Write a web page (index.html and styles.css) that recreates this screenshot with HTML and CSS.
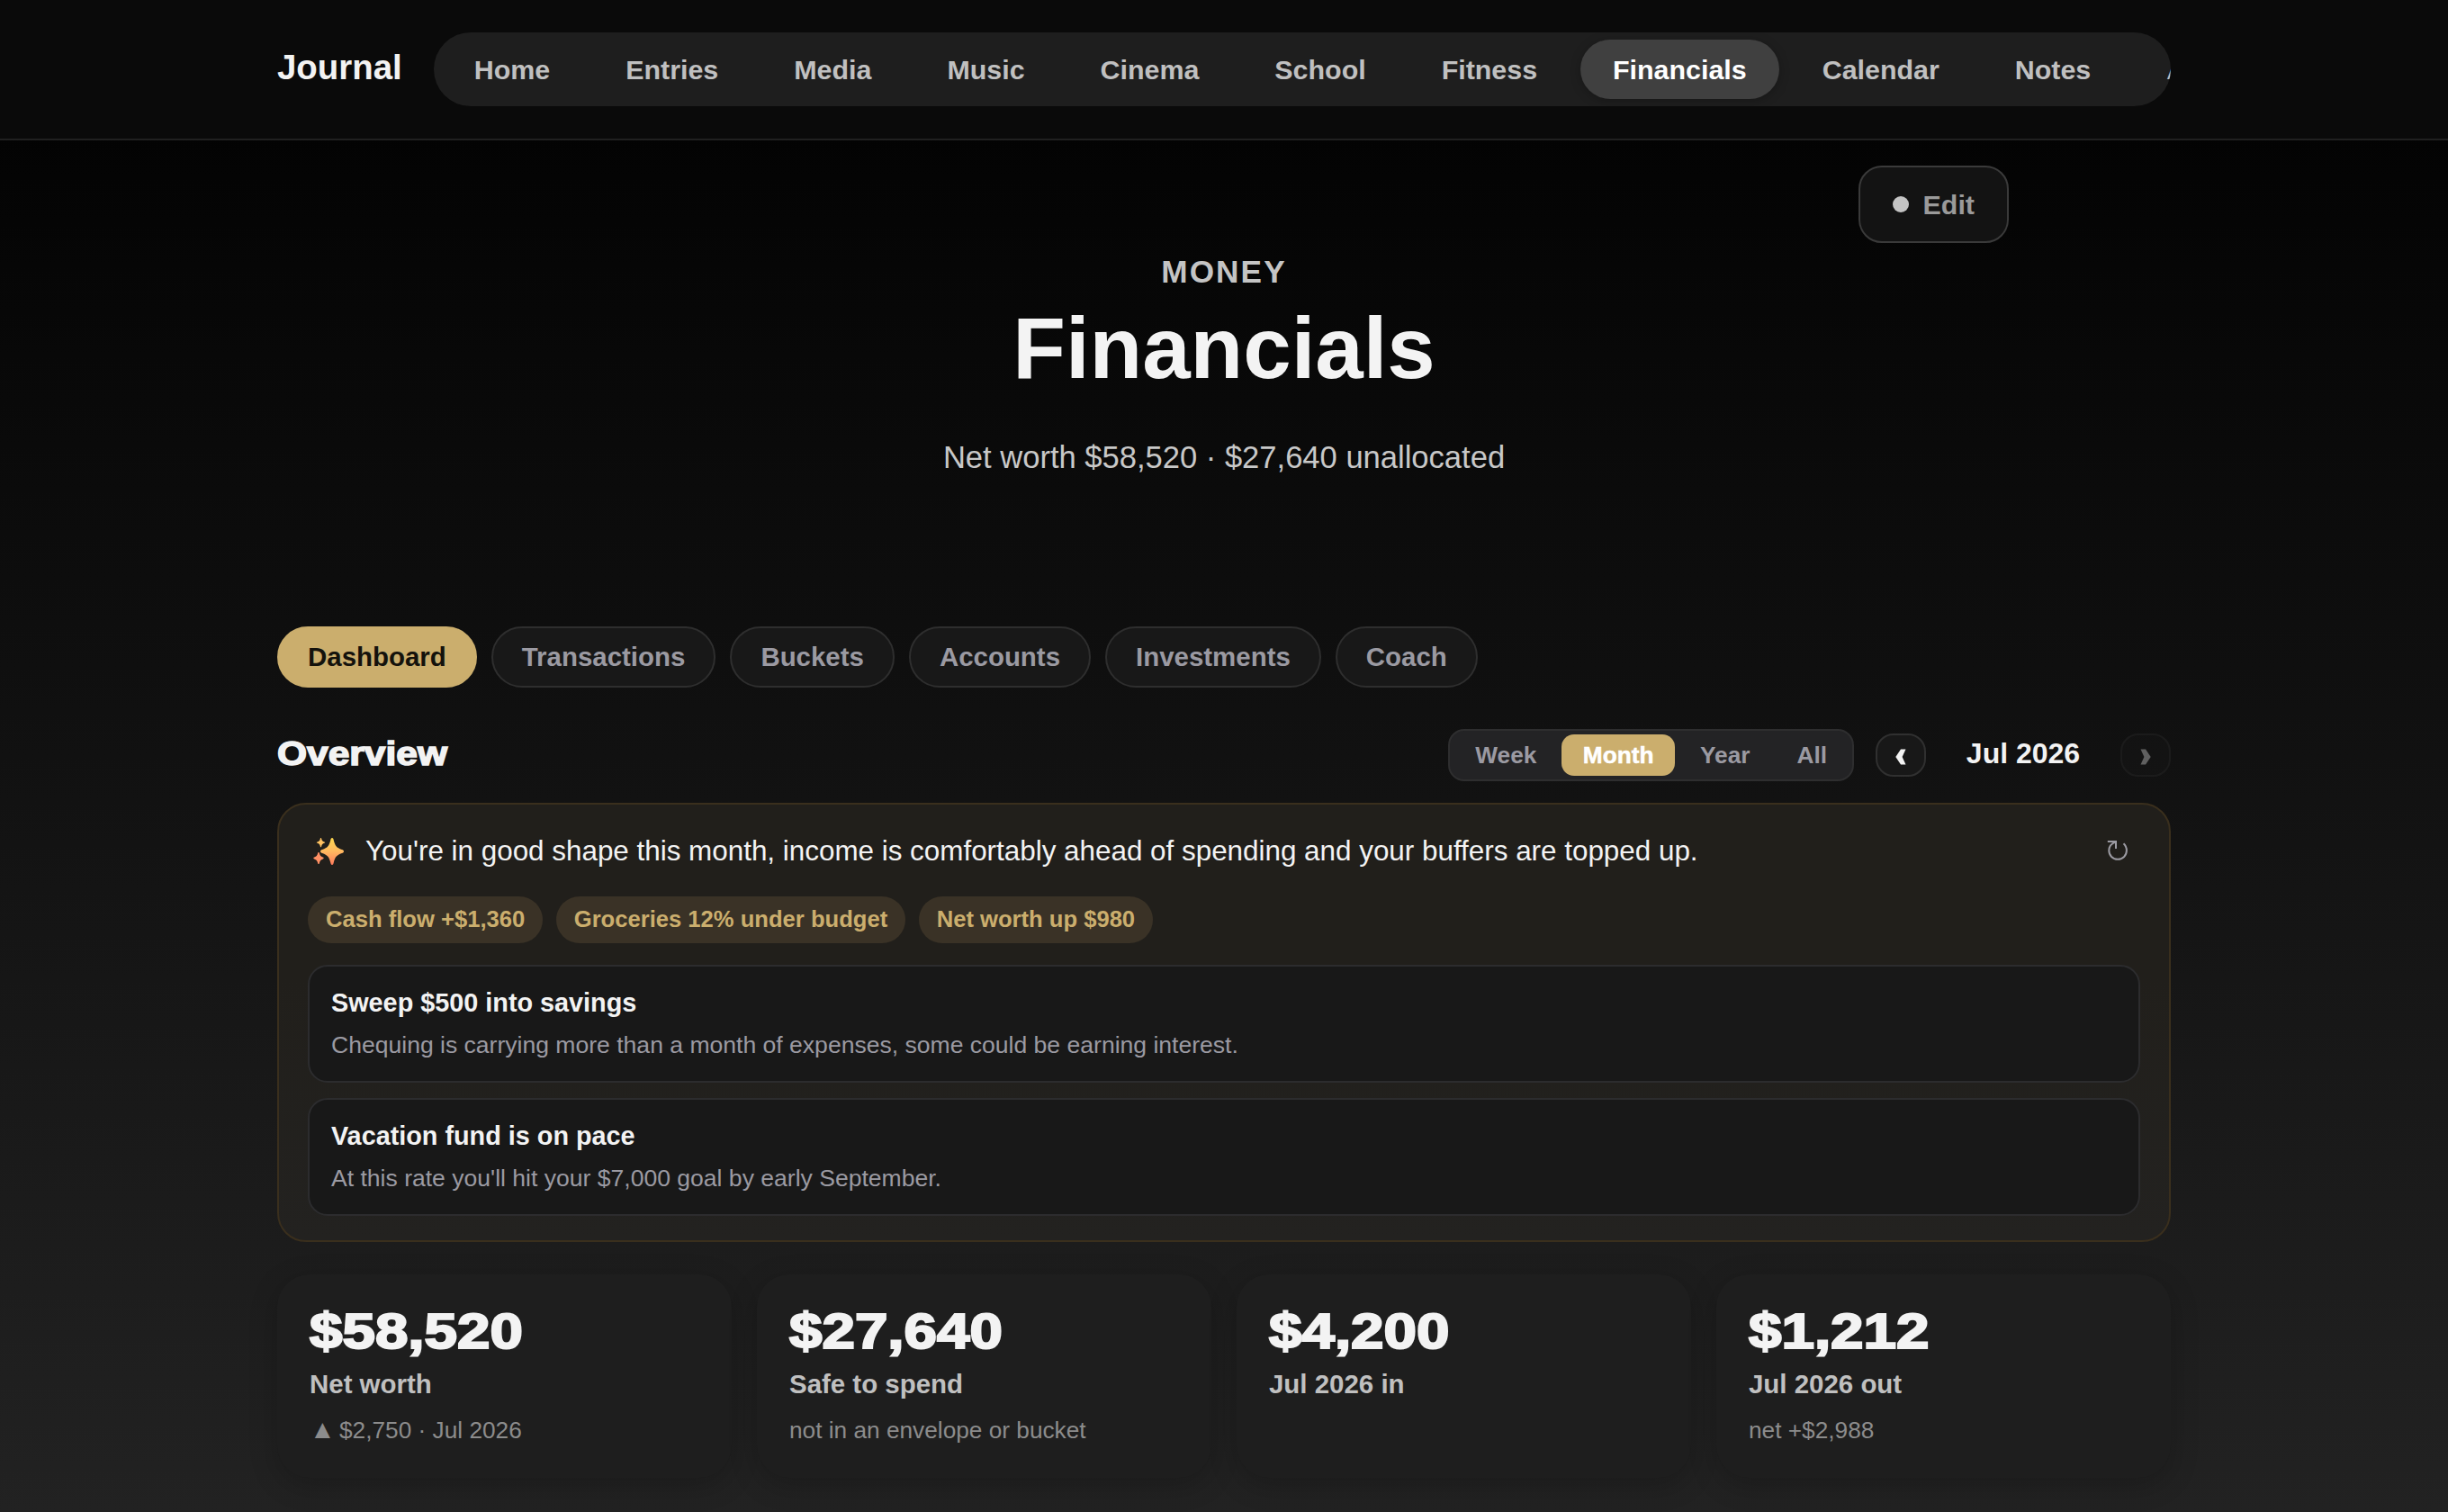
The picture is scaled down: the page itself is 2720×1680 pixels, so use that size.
FILE: index.html
```html
<!DOCTYPE html>
<html lang="en">
<head>
	<meta charset="UTF-8">
	<title>Journal - Financials</title>
	<link rel="stylesheet" href="styles.css">
</head>
<body>
	<header class="topbar">
		<a class="logo">Journal</a>
		<nav class="nav">
			<a>Home</a>
			<a>Entries</a>
			<a>Media</a>
			<a>Music</a>
			<a>Cinema</a>
			<a>School</a>
			<a>Fitness</a>
			<a class="active">Financials</a>
			<a>Calendar</a>
			<a>Notes</a>
			<a>Archive</a>
		</nav>
	</header>

	<div class="toolbar">
		<button class="edit"><span class="dot"></span>Edit</button>
	</div>

	<section class="hero">
		<p class="eyebrow">Money</p>
		<h1>Financials</h1>
		<p class="lead">Net worth $58,520 · $27,640 unallocated</p>
	</section>

	<main class="page">
		<div class="tabs">
			<a class="active">Dashboard</a>
			<a>Transactions</a>
			<a>Buckets</a>
			<a>Accounts</a>
			<a>Investments</a>
			<a>Coach</a>
		</div>

		<div class="head">
			<h2><span class="wide">Overview</span></h2>
			<div class="seg">
				<a>Week</a>
				<a class="active">Month</a>
				<a>Year</a>
				<a>All</a>
			</div>
			<div class="period">
				<button class="step">
					<svg width="12" height="18" viewBox="0 0 12 18"><path d="M11.5 .5H6L.3 9 6 17.5h5.500L7.600 9z"/></svg>
				</button>
				<strong>Jul 2026</strong>
				<button class="step off">
					<svg width="12" height="18" viewBox="0 0 12 18"><path d="M.5 .5H6L11.700 9 6 17.5H.5L4.400 9z"/></svg>
				</button>
			</div>
		</div>

		<section class="coach">
			<div class="coach-top">
				<svg class="spark" width="36" height="32" viewBox="0 0 36 32">
					<defs>
						<linearGradient id="g1" x1="0" y1="0" x2="0" y2="1">
							<stop offset="0" stop-color="#ffd84f"/>
							<stop offset=".5" stop-color="#ffb860"/>
							<stop offset="1" stop-color="#ff7a5c"/>
						</linearGradient>
					</defs>
					<path fill="url(#g1)" d="M22 1c1.200 0 1.400 1 1.700 2.200 1.500 6.500 3.200 8.600 9.200 10.800 1.300.5 2.100.9 2.100 2s-.8 1.500-2.100 2c-6 2.200-7.700 4.300-9.200 10.800-.3 1.200-.5 2.200-1.700 2.200s-1.400-1-1.700-2.200c-1.500-6.500-3.200-8.600-9.200-10.800-1.300-.5-2.100-.9-2.100-2s.8-1.500 2.100-2c6-2.200 7.700-4.300 9.200-10.800.3-1.200.5-2.200 1.700-2.200z"/>
					<path fill="#ffc261" d="M9.500 1c.5 0 .6.500.7 1 .6 2.200 1.200 2.900 3.200 3.500.5.100.8.200.8.600s-.3.500-.8.600c-2 .6-2.600 1.300-3.200 3.500-.1.500-.2 1-.7 1s-.6-.5-.7-1c-.6-2.200-1.200-2.900-3.200-3.500-.5-.1-.8-.2-.8-.6s.3-.5.8-.6c2-.6 2.600-1.300 3.200-3.500.1-.5.200-1 .7-1z"/>
					<path fill="#ff9064" d="M7 17c.6 0 .7.500.9 1.100.7 2.700 1.500 3.700 3.900 4.500.6.200.9.400.9.900s-.3.700-.9.900c-2.400.8-3.200 1.800-3.900 4.500-.2.600-.3 1.100-.9 1.100s-.7-.5-.9-1.100c-.7-2.700-1.500-3.700-3.900-4.500-.6-.2-.9-.4-.9-.9s.3-.7.9-.9c2.400-.8 3.200-1.800 3.900-4.500.2-.6.300-1.100.9-1.100z"/>
				</svg>
				<p>You're in good shape this month, income is comfortably ahead of spending and your buffers are topped up.</p>
				<svg class="refresh" width="24" height="24" viewBox="0 0 24 24"><path d="M.8 2H10v8M9.500 2.600C4.500 4.500 2.300 8 2.300 12c0 5.500 4.200 9.800 9.800 9.800s9.800-4.300 9.800-9.800c0-3-1-5.600-3.400-7.800"/></svg>
			</div>
			<div class="chips">
				<span>Cash flow +$1,360</span>
				<span>Groceries 12% under budget</span>
				<span>Net worth up $980</span>
			</div>
			<div class="tip">
				<h3>Sweep $500 into savings</h3>
				<p>Chequing is carrying more than a month of expenses, some could be earning interest.</p>
			</div>
			<div class="tip">
				<h3>Vacation fund is on pace</h3>
				<p>At this rate you'll hit your $7,000 goal by early September.</p>
			</div>
		</section>

		<div class="stats">
			<div class="stat">
				<b><span class="wide">$58,520</span></b>
				<h4>Net worth</h4>
				<p><span class="up">▲</span>$2,750 · Jul 2026</p>
			</div>
			<div class="stat">
				<b><span class="wide">$27,640</span></b>
				<h4>Safe to spend</h4>
				<p>not in an envelope or bucket</p>
			</div>
			<div class="stat">
				<b><span class="wide">$4,200</span></b>
				<h4>Jul 2026 in</h4>
			</div>
			<div class="stat">
				<b><span class="wide">$1,212</span></b>
				<h4>Jul 2026 out</h4>
				<p>net +$2,988</p>
			</div>
		</div>
	</main>
</body>
</html>
```
FILE: styles.css
```css
* {margin: 0;padding: 0;box-sizing: border-box;}
body {height: 1680px;overflow: hidden;background: linear-gradient(#000, #222);color: #f3f3f3;font-family: "Liberation Sans", Arial, sans-serif;}
button {font: inherit;color: inherit;}

/* top bar */
.topbar {height: 156px;padding: 0 308px;display: flex;align-items: center;background: #0a0a0a;border-bottom: 2px solid #202020;}
.logo {width: 174px;padding-bottom: 4px;font-size: 38.4px;font-weight: 700;}
.nav {flex: 1;min-width: 0;height: 82px;padding: 8px 8px 8px 8.8px;display: flex;gap: 12px;overflow: hidden;background: #1e1e1e;border-radius: 41px;}
.nav a {flex: none;padding: 0 36px;line-height: 66px;border-radius: 33px;font-size: 30.4px;font-weight: 700;color: #c0c0c0;}
.nav .active {background: #404040;color: #fff;box-shadow: 0 2px 12px rgba(0,0,0,.25);}

/* hero */
.toolbar {width: 1744px;margin: 0 auto;padding-top: 28px;display: flex;justify-content: flex-end;}
.edit {height: 86px;padding: 0 36px;display: flex;align-items: center;gap: 16px;background: #131313;border: 2px solid #3a3a3a;border-radius: 26px;font-size: 30.4px;font-weight: 700;color: #9a9a9a;}
.dot {width: 18px;height: 18px;border-radius: 50%;background: #c4c4c4;}
.hero {padding: 12px 0 168px;text-align: center;}
.eyebrow {font-size: 35.2px;line-height: 40px;font-weight: 700;letter-spacing: 2.1px;text-transform: uppercase;color: #c4c4c4;}
.hero h1 {margin: 17px 0 53px;font-size: 96px;line-height: 96px;}
.lead {font-size: 34.56px;line-height: 40px;color: #c8c8c8;}

.page {padding: 0 308px;}
.tabs {display: flex;gap: 16px;}
.tabs a {height: 68px;padding: 0 32px;line-height: 64px;background: #181818;border: 2px solid #2e2e2e;border-radius: 34px;font-size: 29.44px;font-weight: 700;color: #9b9aa2;}
.tabs .active {background: #cbae6d;border-color: #cbae6d;color: #14120c;}

/* extra heavy, extended text */
.wide {display: inline-block;transform: scaleX(1.17);transform-origin: 0 50%;-webkit-text-stroke: 1.5px currentColor;}

/* overview heading */
.head {height: 58px;margin-top: 46px;display: flex;align-items: center;}
.head h2 {flex: 1;font-size: 36px;line-height: 42px;padding-bottom: 2px;}
.head .wide {transform: scaleX(1.18);}
.seg {height: 58px;padding: 4px;display: flex;gap: 4px;background: #232325;border: 2px solid #2e2e2f;border-radius: 18px;}
.seg a {padding: 0 24px;line-height: 46px;border-radius: 14px;font-size: 26.24px;font-weight: 700;color: #9b9aa2;}
.seg .active {padding: 0 23.5px;background: #cbae6d;color: #fff;-webkit-text-stroke: .5px #fff;}
.period {width: 328px;margin-left: 24px;display: flex;align-items: center;justify-content: space-between;}
.period strong {font-size: 32px;line-height: 44px;padding-bottom: 4px;}
.step {width: 56px;height: 48px;display: flex;align-items: center;justify-content: center;background: #181818;border: 2px solid #303030;border-radius: 20px;}
.step svg {fill: #f3f3f3;margin-top: 4px;}
.off {opacity: .35;}

/* coach panel */
.coach {height: 488px;margin-top: 24px;padding: 0 32px;background: linear-gradient(#211f1b 40%, #232220);border: 2px solid #3a2f1d;border-radius: 32px;}
.coach-top {height: 102px;display: flex;align-items: center;}
.coach-top p {flex: 1;margin: 1px 0 0 23px;font-size: 31.4px;line-height: 40px;}
.spark {margin-left: 5px;margin-top: 2px;}
.refresh {margin-right: 13px;fill: none;stroke: #9b9aa2;stroke-width: 2;}
.chips {display: flex;gap: 14.5px;margin-bottom: 24px;}
.chips span {padding: 0 20px 2px;line-height: 50px;border-radius: 26px;background: #3a3226;font-size: 25.6px;font-weight: 700;color: #cbae6d;}
.tip {height: 131px;margin-bottom: 17px;padding: 23px 24px 0;background: #181818;border: 2px solid #2c2c2e;border-radius: 22px;}
.tip h3 {font-size: 28.8px;line-height: 34px;}
.tip p {margin-top: 11px;font-size: 26.56px;line-height: 38px;color: #9b9aa2;}

/* stat cards */
.stats {margin-top: 36px;display: grid;grid-template-columns: repeat(4, 1fr);gap: 28px;}
.stat {height: 226px;padding: 32px 36px;background: #1e1e1e;border-radius: 36px;box-shadow: 0 8px 32px rgba(0,0,0,.2);}
.stat b {display: block;font-size: 56px;line-height: 62px;}
.stat b .wide {-webkit-text-stroke-width: 2.2px;}
.stat h4 {margin-top: 11px;font-size: 29.44px;line-height: 34px;color: #c0c0c0;}
.stat p {margin-top: 18px;font-size: 26.24px;line-height: 32px;color: #8c8c8c;}
.up {display: inline-block;width: 33px;font-size: 29px;line-height: 28px;}
```
